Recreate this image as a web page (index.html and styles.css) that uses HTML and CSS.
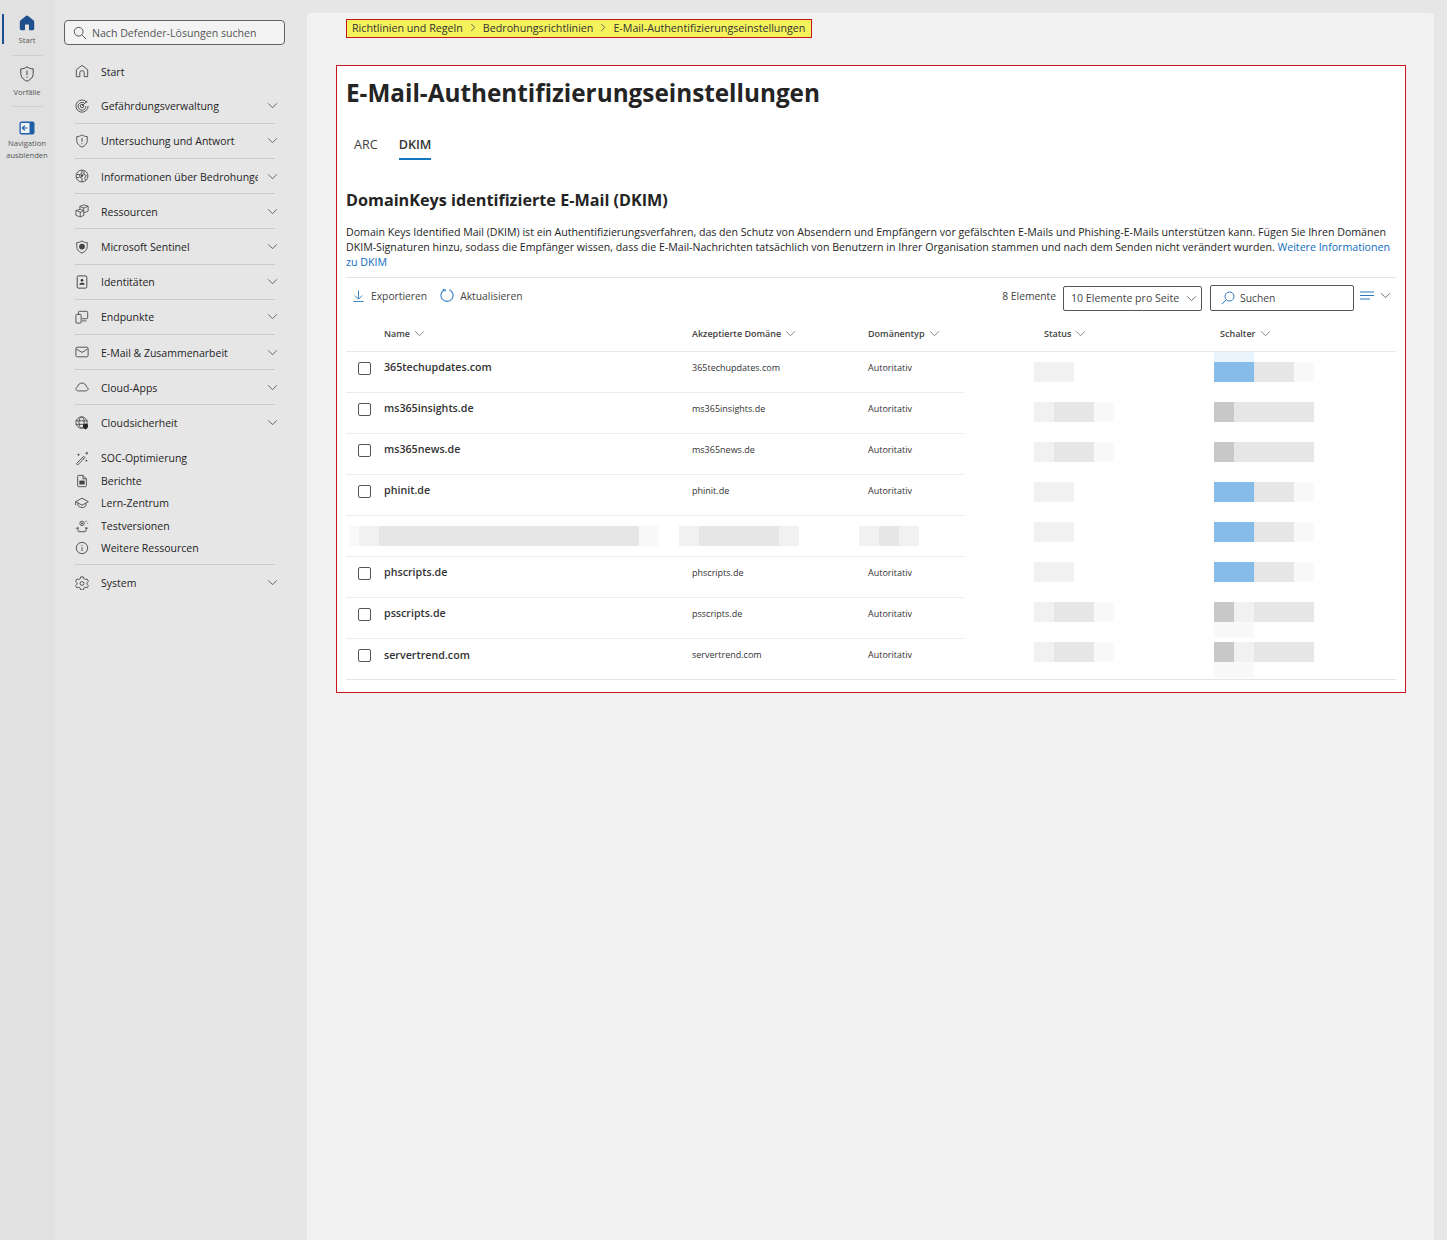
FILE: index.html
```html
<!DOCTYPE html>
<html lang="de">
<head>
    <meta charset="UTF-8">
    <title>E-Mail-Authentifizierungseinstellungen</title>
    <link rel="stylesheet" href="styles.css">
</head>
<body>
    <svg class="sprite" width="0" height="0">
        <symbol id="chev" viewBox="0 0 12 8"><path d="M1 1.5l5 5 5-5" fill="none" stroke="currentColor"/></symbol>
    </svg>

    <div class="rail">
        <div class="rail-item active">
            <svg class="rail-icon" viewBox="0 0 16 16"><path d="M6.6 1.2a2.2 2.2 0 0 1 2.8 0l5 4.1c.5.4.8 1 .8 1.7v6.6c0 .9-.7 1.6-1.6 1.6H11c-.6 0-1-.4-1-1v-3.7c0-.6-.4-1-1-1H7c-.6 0-1 .4-1 1v3.7c0 .6-.4 1-1 1H2.4c-.9 0-1.6-.7-1.6-1.6V7c0-.7.3-1.3.8-1.7z" fill="#1f4e8c"/></svg>
            <span>Start</span>
        </div>
        <div class="rail-item">
            <svg class="rail-icon" viewBox="0 0 16 16"><path d="M8 .8c1.8 1.4 3.8 2 6.2 2.1v4.6c0 3.4-2.2 6-6.2 7.7-4-1.7-6.2-4.3-6.2-7.7V2.9C4.200 2.800 6.200 2.200 8 .8z" fill="none" stroke="#444"/><path d="M8 4.500v4.500M8 10.500v1.200" stroke="#444" fill="none"/></svg>
            <span>Vorfälle</span>
        </div>
        <div class="rail-item last">
            <svg class="rail-icon wide" viewBox="0 0 16 14"><rect x=".5" y=".5" width="15" height="13" rx="2" fill="#1f5fa8"/><rect x="1.800" y="2" width="8.700" height="10" fill="#eef3f8"/><path d="M8.500 7H3.800M5.800 4.800L3.500 7l2.300 2.200" fill="none" stroke="#1f5fa8" stroke-width="1.200"/></svg>
            <span>Navigation ausblenden</span>
        </div>
    </div>

    <nav class="nav">
        <div class="nav-search">
            <svg class="ico" viewBox="0 0 16 16"><circle cx="6.500" cy="6.500" r="5" fill="none" stroke="#444"/><path d="M10.200 10.200l4.800 4.800" stroke="#444"/></svg>
            <span>Nach Defender-Lösungen suchen</span>
        </div>

        <ul class="nav-list">
            <li class="nav-item plain">
                <svg class="ico" viewBox="0 0 16 16"><path d="M1.500 6.500L8 1.500l6.500 5v8h-4v-4.500a2.500 2.500 0 0 0-5 0v4.500h-4z" fill="none" stroke="#444" stroke-linejoin="round"/></svg>
                <span class="nav-label">Start</span>
            </li>
            <li class="nav-item">
                <svg class="ico" viewBox="0 0 16 16"><path d="M14 4.500A7 7 0 1 0 15 8" fill="none" stroke="#444"/><path d="M11.500 5.500A4.500 4.500 0 1 0 12.500 8" fill="none" stroke="#444"/><circle cx="8" cy="8" r="2" fill="none" stroke="#444"/><path d="M8 8l6-6" stroke="#444"/></svg>
                <span class="nav-label">Gefährdungsverwaltung</span>
                <svg class="chev"><use href="#chev"/></svg>
            </li>
            <li class="nav-item">
                <svg class="ico" viewBox="0 0 16 16"><path d="M8 1c1.800 1.300 3.700 1.900 6 2v4.500c0 3.200-2 5.700-6 7.500-4-1.800-6-4.300-6-7.500V3c2.300-.1 4.200-.7 6-2z" fill="none" stroke="#444"/><path d="M8 4.500v4.500M8 10.500v1.200" stroke="#444"/></svg>
                <span class="nav-label">Untersuchung und Antwort</span>
                <svg class="chev"><use href="#chev"/></svg>
            </li>
            <li class="nav-item">
                <svg class="ico" viewBox="0 0 16 16"><circle cx="8" cy="8" r="6.800" fill="none" stroke="#444"/><path d="M8 1.500v3l-3 2 1 3 2 1v4M2 6l3 .5M10.500 2.500L10 6l3 1.500-2 3 1 2.500M1.500 10L5 9.500" fill="none" stroke="#444"/><circle cx="8" cy="7.500" r="1.500" fill="#444"/></svg>
                <span class="nav-label clip">Informationen über Bedrohungen</span>
                <svg class="chev"><use href="#chev"/></svg>
            </li>
            <li class="nav-item">
                <svg class="ico" viewBox="0 0 16 16"><path d="M1 7.500L6 6l4 1.500V13l-4 1.800L1 13zM1 7.500l5 1.800 4-1.800M6 9.300v5.500M5.500 5.500V2.800L10 1l5 1.500v5.700l-5 2M5.500 2.800l4.500 1.700 5-2M10 4.500v3" fill="none" stroke="#444" stroke-width=".9"/></svg>
                <span class="nav-label">Ressourcen</span>
                <svg class="chev"><use href="#chev"/></svg>
            </li>
            <li class="nav-item">
                <svg class="ico" viewBox="0 0 16 16"><path d="M8 1c1.800 1.300 3.700 1.900 6 2v4.500c0 3.200-2 5.700-6 7.500-4-1.800-6-4.300-6-7.500V3c2.300-.1 4.200-.7 6-2z" fill="none" stroke="#444"/><circle cx="8" cy="7.500" r="3.300" fill="#444"/></svg>
                <span class="nav-label">Microsoft Sentinel</span>
                <svg class="chev"><use href="#chev"/></svg>
            </li>
            <li class="nav-item">
                <svg class="ico" viewBox="0 0 16 16"><rect x="2.500" y="1" width="11" height="14" rx="1.500" fill="none" stroke="#333"/><circle cx="8" cy="6" r="1.500" fill="#333"/><path d="M5 11c0-3 6-3 6 0z" fill="#333"/></svg>
                <span class="nav-label">Identitäten</span>
                <svg class="chev"><use href="#chev"/></svg>
            </li>
            <li class="nav-item">
                <svg class="ico" viewBox="0 0 16 16"><path d="M4 5V2.500c0-.6.400-1 1-1h8.500c.6 0 1 .4 1 1V9c0 .6-.4 1-1 1H8M8 12.500h5" fill="none" stroke="#444"/><rect x="1" y="5" width="6" height="10" rx="1" fill="none" stroke="#444"/></svg>
                <span class="nav-label">Endpunkte</span>
                <svg class="chev"><use href="#chev"/></svg>
            </li>
            <li class="nav-item">
                <svg class="ico" viewBox="0 0 16 16"><rect x="1" y="2.500" width="14" height="11" rx="1.500" fill="none" stroke="#444"/><path d="M1.500 4.500L8 8.500l6.500-4" fill="none" stroke="#444"/></svg>
                <span class="nav-label">E-Mail &amp; Zusammenarbeit</span>
                <svg class="chev"><use href="#chev"/></svg>
            </li>
            <li class="nav-item">
                <svg class="ico" viewBox="0 0 16 16"><path d="M4 12.500c-3.500 0-4-3.800-1-4.800C3.500 5 5.500 3.500 8 3.500s4.500 1.500 5 4.200c3 1 2.500 4.800-1 4.800z" fill="none" stroke="#444"/></svg>
                <span class="nav-label">Cloud-Apps</span>
                <svg class="chev"><use href="#chev"/></svg>
            </li>
            <li class="nav-item plain">
                <svg class="ico" viewBox="0 0 16 16"><circle cx="7.500" cy="7.500" r="6.500" fill="none" stroke="#444"/><ellipse cx="7.500" cy="7.500" rx="3" ry="6.500" fill="none" stroke="#444"/><path d="M1 5.500h13M1 9.500h13" stroke="#444"/><path d="M12 8.500c.9.700 1.700 1 2.800 1v2.500c0 1.400-1 2.500-2.800 3.300-1.800-.8-2.800-1.900-2.800-3.300V9.500c1.100 0 1.900-.3 2.800-1z" fill="#222"/></svg>
                <span class="nav-label">Cloudsicherheit</span>
                <svg class="chev"><use href="#chev"/></svg>
            </li>
        </ul>

        <ul class="nav-list small">
            <li class="nav-item plain">
                <svg class="ico" viewBox="0 0 16 16"><path d="M1.500 14.500L10 6l1.500 1.500L3 16zM8.500 7.500L10 9" fill="none" stroke="#444"/><path d="M13.500 1v3M12 2.500h3M4 3v2.500M2.800 4.200h2.400M13 10v2M12 11h2" stroke="#444"/></svg>
                <span class="nav-label">SOC-Optimierung</span>
            </li>
            <li class="nav-item plain">
                <svg class="ico" viewBox="0 0 16 16"><path d="M3 2.500c0-.6.400-1 1-1h5l4 4v8c0 .6-.4 1-1 1H4c-.6 0-1-.4-1-1z" fill="none" stroke="#444"/><path d="M9 1.500v4h4" fill="none" stroke="#444"/><rect x="5" y="7.500" width="6" height="4.500" fill="#444"/></svg>
                <span class="nav-label">Berichte</span>
            </li>
            <li class="nav-item plain">
                <svg class="ico" viewBox="0 0 16 16"><path d="M8 2.500L.8 6.500 8 10.500l7.200-4zM3.500 8.200v3c1.500 2.500 7.500 2.500 9 0v-3M.8 6.500v4" fill="none" stroke="#444"/></svg>
                <span class="nav-label">Lern-Zentrum</span>
            </li>
            <li class="nav-item plain">
                <svg class="ico" viewBox="0 0 16 16"><path d="M3.500 9v4.500c0 .6.400 1 1 1h7c.6 0 1-.4 1-1V9M1 10.500h2.500M12.500 10.500H15" fill="none" stroke="#444"/><circle cx="8" cy="5" r="2.500" fill="none" stroke="#444"/><circle cx="8" cy="5" r="1" fill="#444"/><path d="M12.500 2v1.500M14 5h1" stroke="#444"/></svg>
                <span class="nav-label">Testversionen</span>
            </li>
            <li class="nav-item plain">
                <svg class="ico" viewBox="0 0 16 16"><circle cx="8" cy="8" r="6.500" fill="none" stroke="#444"/><path d="M8 7v4.500M8 4.500v1.200" stroke="#444"/></svg>
                <span class="nav-label">Weitere Ressourcen</span>
            </li>
        </ul>

        <ul class="nav-list system">
            <li class="nav-item plain">
                <svg class="ico" viewBox="0 0 16 16"><path d="M6.500 1h3l.5 2 1.800 1 2-.6 1.500 2.600-1.500 1.500v1.900l1.500 1.500-1.500 2.600-2-.6-1.800 1-.5 2h-3l-.5-2-1.800-1-2 .6L.7 10.900l1.500-1.500V7.500L.7 6l1.500-2.600 2 .6L6 3z" fill="none" stroke="#444" stroke-linejoin="round"/><circle cx="8" cy="8.500" r="2.200" fill="none" stroke="#444"/></svg>
                <span class="nav-label">System</span>
                <svg class="chev"><use href="#chev"/></svg>
            </li>
        </ul>
    </nav>

    <main class="main">
        <div class="crumbs">
            <span>Richtlinien und Regeln</span>
            <svg class="crumb-sep" viewBox="0 0 6 10"><path d="M1 1l4 4-4 4" fill="none" stroke="#555"/></svg>
            <span>Bedrohungsrichtlinien</span>
            <svg class="crumb-sep" viewBox="0 0 6 10"><path d="M1 1l4 4-4 4" fill="none" stroke="#555"/></svg>
            <span>E-Mail-Authentifizierungseinstellungen</span>
        </div>

        <section class="card">
            <h1>E-Mail-Authentifizierungseinstellungen</h1>

            <div class="tabs">
                <span class="tab">ARC</span>
                <span class="tab current">DKIM</span>
            </div>

            <h2>DomainKeys identifizierte E-Mail (DKIM)</h2>

            <p class="intro">Domain Keys Identified Mail (DKIM) ist ein Authentifizierungsverfahren, das den Schutz von Absendern und Empfängern vor gefälschten E-Mails und Phishing-E-Mails unterstützen kann. Fügen Sie Ihren Domänen<br>DKIM-Signaturen hinzu, sodass die Empfänger wissen, dass die E-Mail-Nachrichten tatsächlich von Benutzern in Ihrer Organisation stammen und nach dem Senden nicht verändert wurden. <a href="#">Weitere Informationen<br>zu DKIM</a></p>

            <div class="toolbar">
                <div class="action export">
                    <svg viewBox="0 0 12 14"><path d="M6 1v9M2 6.500L6 10.500l4-4M.5 13h11" fill="none" stroke="#2b79c2"/></svg>
                    <span>Exportieren</span>
                </div>
                <div class="action refresh">
                    <svg viewBox="0 0 15 15"><path d="M5 1.300A6.500 6.500 0 1 0 10 1.300" fill="none" stroke="#2b79c2" stroke-width="1.100"/><path d="M5.500 3.500V1H3" fill="none" stroke="#2b79c2"/></svg>
                    <span>Aktualisieren</span>
                </div>
                <div class="spacer"></div>
                <span class="count">8 Elemente</span>
                <div class="select">
                    <span>10 Elemente pro Seite</span>
                    <svg class="chev"><use href="#chev"/></svg>
                </div>
                <div class="searchbox">
                    <svg viewBox="0 0 14 14"><circle cx="8.500" cy="5.500" r="4.500" fill="none" stroke="#2b79c2"/><path d="M5.300 8.700L.8 13.200" stroke="#2b79c2"/></svg>
                    <span>Suchen</span>
                </div>
                <div class="filter">
                    <svg viewBox="0 0 14 10"><path d="M0 1h14M0 4.500h14M0 8h10" stroke="#2b79c2"/></svg>
                    <svg class="chev"><use href="#chev"/></svg>
                </div>
            </div>

            <div class="thead">
                <div class="th col-name">Name <svg class="chev"><use href="#chev"/></svg></div>
                <div class="th col-domain">Akzeptierte Domäne <svg class="chev"><use href="#chev"/></svg></div>
                <div class="th col-type">Domänentyp <svg class="chev"><use href="#chev"/></svg></div>
                <div class="th col-status">Status <svg class="chev"><use href="#chev"/></svg></div>
                <div class="th col-switch">Schalter <svg class="chev"><use href="#chev"/></svg></div>
            </div>

            <div class="tbody">
                <div class="rows">
                    <div class="row"><i class="check"></i><div class="col-name">365techupdates.com</div><div class="col-domain">365techupdates.com</div><div class="col-type">Autoritativ</div></div>
                    <div class="row"><i class="check"></i><div class="col-name">ms365insights.de</div><div class="col-domain">ms365insights.de</div><div class="col-type">Autoritativ</div></div>
                    <div class="row"><i class="check"></i><div class="col-name">ms365news.de</div><div class="col-domain">ms365news.de</div><div class="col-type">Autoritativ</div></div>
                    <div class="row"><i class="check"></i><div class="col-name">phinit.de</div><div class="col-domain">phinit.de</div><div class="col-type">Autoritativ</div></div>
                    <div class="row hidden-row">
                        <div class="px-run run-name"><b class="half s1"></b><b class="s2"></b><b class="s3 long"></b><b class="s1"></b></div>
                        <div class="px-run run-domain"><b class="s2"></b><b class="s3"></b><b class="s3"></b><b class="s3"></b><b class="s3"></b><b class="s2"></b></div>
                        <div class="px-run run-type"><b class="s2"></b><b class="s3"></b><b class="s2"></b></div>
                    </div>
                    <div class="row"><i class="check"></i><div class="col-name">phscripts.de</div><div class="col-domain">phscripts.de</div><div class="col-type">Autoritativ</div></div>
                    <div class="row"><i class="check"></i><div class="col-name">psscripts.de</div><div class="col-domain">psscripts.de</div><div class="col-type">Autoritativ</div></div>
                    <div class="row"><i class="check"></i><div class="col-name">servertrend.com</div><div class="col-domain">servertrend.com</div><div class="col-type">Autoritativ</div></div>
                </div>

                <div class="px-col status-col">
                    <div class="px-run"><b class="s2"></b><b class="s2"></b></div>
                    <div class="px-run"><b class="s2"></b><b class="s3"></b><b class="s3"></b><b class="s1"></b></div>
                    <div class="px-run"><b class="s2"></b><b class="s3"></b><b class="s3"></b><b class="s1"></b></div>
                    <div class="px-run"><b class="s2"></b><b class="s2"></b></div>
                    <div class="px-run"><b class="s2"></b><b class="s2"></b></div>
                    <div class="px-run"><b class="s2"></b><b class="s2"></b></div>
                    <div class="px-run"><b class="s2"></b><b class="s3"></b><b class="s3"></b><b class="s1"></b></div>
                    <div class="px-run"><b class="s2"></b><b class="s3"></b><b class="s3"></b><b class="s1"></b></div>
                </div>

                <div class="px-col switch-col">
                    <div class="px-run first"><b class="on"></b><b class="on"></b><b class="s3"></b><b class="s3"></b><b class="s1"></b></div>
                    <div class="px-run"><b class="off"></b><b class="s3"></b><b class="s3"></b><b class="s3"></b><b class="s3"></b></div>
                    <div class="px-run"><b class="off"></b><b class="s3"></b><b class="s3"></b><b class="s3"></b><b class="s3"></b></div>
                    <div class="px-run"><b class="on"></b><b class="on"></b><b class="s3"></b><b class="s3"></b><b class="s1"></b></div>
                    <div class="px-run"><b class="on"></b><b class="on"></b><b class="s3"></b><b class="s3"></b><b class="s1"></b></div>
                    <div class="px-run"><b class="on"></b><b class="on"></b><b class="s3"></b><b class="s3"></b><b class="s1"></b></div>
                    <div class="px-run trail"><b class="off"></b><b class="s2"></b><b class="s3"></b><b class="s3"></b><b class="s3"></b></div>
                    <div class="px-run trail"><b class="off"></b><b class="s2"></b><b class="s3"></b><b class="s3"></b><b class="s3"></b></div>
                </div>
            </div>
        </section>
    </main>
</body>
</html>
```

FILE: styles.css
```css
* {
    box-sizing: border-box;
}

body {
    margin: 0;
    height: 1240px;
    overflow: hidden;
    display: flex;
    background: #e6e6e6;
    font-family: "Open Sans", "Noto Sans", sans-serif;
    font-size: 10.500px;
    color: #242424;
}

.sprite {
    position: absolute;
}

.chev {
    width: 11px;
    height: 7px;
    color: #555;
    flex-shrink: 0;
}

/* schmale Leiste ganz links */
.rail {
    width: 54px;
    flex-shrink: 0;
    background: #e1e1e1;
    padding-top: 15px;
    display: flex;
    flex-direction: column;
    align-items: center;
    font-size: 7.600px;
    line-height: 12px;
    color: #555;
    text-align: center;
}

.rail-item {
    width: 54px;
    height: 41px;
    margin-bottom: 11px;
    display: flex;
    flex-direction: column;
    align-items: center;
    gap: 4px;
    position: relative;
}

.rail-item::after {
    content: "";
    position: absolute;
    left: 12px;
    right: 11px;
    bottom: 0;
    height: 1px;
    background: #cfcfcf;
}

.rail-item.last {
    gap: 2px;
}

.rail-item.last::after {
    display: none;
}

.rail-item.active {
    height: 41px;
    margin-bottom: 10px;
    gap: 3px;
}

.rail-item.active::before {
    content: "";
    position: absolute;
    left: 2px;
    top: -1px;
    width: 1.500px;
    height: 30px;
    background: #1f4e8c;
}

.rail-icon {
    width: 16px;
    height: 16px;
    flex-shrink: 0;
}

.rail-icon.wide {
    height: 14px;
    margin-top: 3px;
}

/* Navigation */
.nav {
    width: 253px;
    flex-shrink: 0;
    padding: 20px 22px 0 10px;
}

.nav-search {
    height: 25px;
    background: #f3f3f3;
    border: 1px solid #616161;
    border-radius: 4px;
    display: flex;
    align-items: center;
    gap: 5px;
    padding-left: 8px;
    color: #555;
    font-size: 10.600px;
}

.ico {
    width: 14px;
    height: 14px;
    flex-shrink: 0;
}

.nav-list {
    list-style: none;
    margin: 8.500px 0 0 11px;
    padding: 0;
    width: 200px;
}

.nav-item {
    height: 35.200px;
    display: flex;
    align-items: center;
    gap: 12px;
    border-bottom: 1px solid #c9c9c9;
    white-space: nowrap;
}

.nav-item.plain {
    border-bottom: none;
}

.nav-label {
    flex: 1;
    font-size: 10.500px;
    padding-top: 1px;
    overflow: hidden;
}

.nav-label.clip {
    margin-right: -3px;
}

.nav-item .chev {
    margin-right: -3px;
}

.nav-list.small {
    margin-top: 6.500px;
    padding-bottom: 4.500px;
    border-bottom: 1px solid #c9c9c9;
}

.nav-list.small .nav-item {
    height: 22.500px;
}

.nav-list.small .nav-label {
    padding-top: 0;
}

.nav-list.system {
    margin-top: 0;
}

/* Inhalt */
.main {
    width: 1127px;
    margin-top: 13px;
    background: #f2f2f2;
    padding: 6px 0 0 29px;
    border-radius: 4px 4px 0 0;
}

.crumbs {
    margin-left: 10px;
    width: 466px;
    height: 19px;
    background: #f5f25c;
    border: 1px solid #c8141e;
    display: flex;
    align-items: center;
    gap: 7px;
    padding: 0 0 2px 5px;
    white-space: nowrap;
    font-size: 10.700px;
    color: #333;
}

.crumb-sep {
    width: 6px;
    height: 9px;
    flex-shrink: 0;
}

.card {
    margin-top: 27px;
    width: 1070px;
    height: 628px;
    background: #fff;
    border: 1px solid #c8141e;
    padding: 0 9px;
}

h1 {
    margin: 11px 0 0;
    font-size: 24.300px;
    line-height: 32px;
    font-weight: 700;
    color: #242424;
    white-space: nowrap;
}

.tabs {
    display: flex;
    gap: 21px;
    margin: 25px 0 0 8px;
    font-size: 12.600px;
}

.tab {
    height: 34px;
    padding-top: 2px;
    color: #424242;
}

.tab.current {
    color: #333;
    font-weight: 600;
    position: relative;
}

.tab.current::after {
    content: "";
    position: absolute;
    left: 0;
    right: 0;
    bottom: 8px;
    height: 2px;
    background: #0f78c0;
}

h2 {
    margin: 20px 0 0;
    font-size: 16.200px;
    line-height: 24px;
    font-weight: 700;
}

.intro {
    margin: 13px 0 0;
    font-size: 10.620px;
    line-height: 15px;
    white-space: nowrap;
}

.intro a {
    color: #0f6cbd;
    text-decoration: none;
}

.toolbar {
    margin-top: 7px;
    height: 38px;
    border-top: 1px solid #e4e4e4;
    display: flex;
    align-items: center;
    padding: 0 5px 0 7px;
    font-size: 10.300px;
    color: #444;
}

.action {
    display: flex;
    align-items: center;
    gap: 7px;
    margin-bottom: 2px;
}

.count {
    margin-bottom: 2px;
}

.action svg {
    width: 11px;
    height: 14px;
}

.action.refresh {
    margin-left: 13px;
}

.action.refresh svg {
    width: 14px;
    height: 15px;
    margin-right: -1px;
}

.spacer {
    flex: 1;
}

.select {
    width: 139px;
    height: 25px;
    margin: 3px 0 0 7px;
    border: 1px solid #555;
    border-radius: 2px;
    display: flex;
    align-items: center;
    justify-content: space-between;
    padding: 0 4px 0 7px;
    white-space: nowrap;
    font-size: 10.600px;
}

.searchbox {
    width: 144px;
    height: 26px;
    margin: 3px 0 0 8px;
    border: 1px solid #555;
    border-radius: 2px;
    display: flex;
    align-items: center;
    gap: 5px;
    padding-left: 10px;
}

.searchbox svg {
    width: 14px;
    height: 14px;
}

.filter {
    display: flex;
    align-items: center;
    gap: 6px;
    margin: 0 0 2px 6px;
}

.filter svg:first-child {
    width: 14px;
    height: 10px;
}

.thead {
    height: 37px;
    border-bottom: 1px solid #e8e8e8;
    display: flex;
    align-items: center;
    font-size: 9px;
    font-weight: 600;
    color: #444;
    white-space: nowrap;
}

.th {
    display: flex;
    align-items: center;
    gap: 4px;
}

.th .chev {
    color: #777;
}

.col-name {
    margin-left: 38px;
    width: 308px;
    flex-shrink: 0;
}

.col-domain {
    width: 176px;
    flex-shrink: 0;
}

.col-type {
    width: 176px;
    flex-shrink: 0;
}

.col-status {
    width: 176px;
    flex-shrink: 0;
}

.tbody {
    display: flex;
    height: 328px;
    border-bottom: 1px solid #e4e4e4;
}

.rows {
    width: 618px;
    flex-shrink: 0;
}

.row {
    height: 41px;
    display: flex;
    align-items: center;
    padding-bottom: 8px;
    border-bottom: 1px solid #ececec;
    font-size: 9px;
    color: #333;
    white-space: nowrap;
}

.row:last-child {
    border-bottom: none;
}

.row .col-name {
    margin: 0 0 2px 13px;
    font-size: 10.700px;
    font-weight: 560;
}

.row .col-domain,
.row .col-type {
    margin-bottom: 2px;
}

.row .col-type {
    width: 96px;
}

.check {
    width: 13px;
    height: 13px;
    margin-left: 12px;
    border: 1px solid #555;
    border-radius: 2px;
    flex-shrink: 0;
}

.hidden-row {
    padding: 10px 0 0 3px;
    align-items: flex-start;
}

/* verpixelte Bereiche */
.px-run {
    display: flex;
    height: 20px;
}

.px-run b {
    width: 20px;
    height: 20px;
    flex-shrink: 0;
}

.px-run b.half {
    width: 10px;
}

.px-run b.long {
    width: 260px;
}

.run-domain {
    margin-left: 20px;
}

.run-type {
    margin-left: 60px;
}

.s1 {
    background: #f9f9f9;
}

.s2 {
    background: #f1f1f1;
}

.s3 {
    background: #e6e6e6;
}

.on {
    background: #85bcea;
}

.off {
    background: #c8c8c8;
}

.px-col {
    display: flex;
    flex-direction: column;
    gap: 20px;
    padding-top: 10px;
}

.status-col {
    margin-left: 70px;
    width: 180px;
}

.px-run.first {
    position: relative;
}

.px-run.first::before {
    content: "";
    position: absolute;
    left: 0;
    top: -10px;
    width: 40px;
    height: 10px;
    background: #e9f4fc;
}

.px-run.trail {
    position: relative;
}

.px-run.trail::after {
    content: "";
    position: absolute;
    left: 0;
    top: 20px;
    width: 40px;
    height: 16px;
    background: #f9f9f9;
}
```
